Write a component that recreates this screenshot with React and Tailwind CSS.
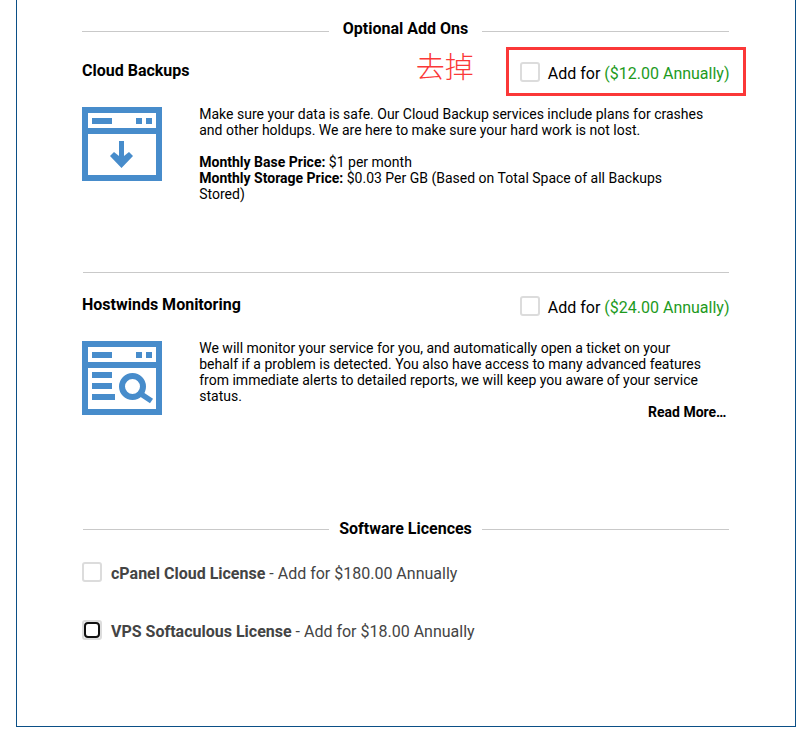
function SectionTitle({ children, leftRule, rightRule }) {
  return (
    <div className="flex h-5 w-[647px] items-start justify-between text-base font-bold leading-5 text-black">
      <span className={`h-px bg-[#c9c9c9] ${leftRule}`} />
      <h2 className="whitespace-nowrap">{children}</h2>
      <span className={`h-px w-[247px] bg-[#c9c9c9] ${rightRule}`} />
    </div>
  );
}

function Checkbox({ focused }) {
  return (
    <span className="flex size-5 shrink-0 items-center justify-center rounded-[3px] border-2 border-[#dcdcdc] bg-white">
      {focused && <span className="size-4 shrink-0 rounded-[4px] border-2 border-[#101010]" />}
    </span>
  );
}

function WindowIcon({ children }) {
  return (
    <svg className="block h-[74px] w-20 shrink-0" viewBox="0 0 80 74" fill="#478ccb">
      <path fillRule="evenodd" d="M0 0H80V74H0ZM6 6V21H74V6ZM6 27V68H74V27Z" />
      <path d="M10 11H30V17H10ZM54 11H60V17H54ZM64 11H70V17H64Z" />
      {children}
    </svg>
  );
}

function AddOn({ title, price, icon, note, highlight, children }) {
  return (
    <section className="text-black">
      <div className="-mr-[0.5px] flex h-[27px] items-start justify-between">
        <h3 className="pt-px text-base font-bold leading-5">{title}</h3>
        <div className="relative flex gap-2 pt-0.5">
          {note && (
            <span className="absolute -left-[104px] -top-[15px] whitespace-nowrap font-['Noto_Sans_CJK_SC',sans-serif] text-[29px] font-light leading-[40px] text-[#fb3838]">
              {note}
            </span>
          )}
          {highlight && (
            <span className="absolute -left-[14px] -top-[13px] h-[49px] w-60 border-[3px] border-[#fb3838]" />
          )}
          <Checkbox />
          <span className="whitespace-nowrap pt-0.5 text-base leading-5">
            Add for <span className="text-[#1d9a1d]">({price} Annually)</span>
          </span>
        </div>
      </div>
      <div className="mt-5 flex gap-[37px]">
        {icon}
        <div className="-mt-px w-[531px] pl-[0.25px] text-sm leading-4">{children}</div>
      </div>
    </section>
  );
}

function License({ name, price, focused }) {
  return (
    <div className="flex h-5 items-center gap-[9px] text-base leading-5 text-[#444]">
      <Checkbox focused={focused} />
      <span className="pt-[3px]">
        <b className="font-bold">{name}</b> - Add for {price} Annually
      </span>
    </div>
  );
}

export default function App() {
  return (
    <div className="h-[740px] w-[812px] overflow-hidden bg-white px-4 font-[Roboto,sans-serif]">
      <main className="h-[727px] w-[780px] border border-t-0 border-[#0b4f86] pl-[65px] pt-[19px]">
        <div className="w-[647px]">
          <SectionTitle leftRule="mt-3 w-[247px]" rightRule="mt-3">Optional Add Ons</SectionTitle>

          <div className="mt-[21px] h-[212px]">
            <AddOn
              title="Cloud Backups"
              price="$12.00"
              note="去掉"
              highlight
              icon={
                <WindowIcon>
                  <path d="M37 34H42V49L47 45L51 49L39.5 61L28 49L32 45L37 49Z" />
                </WindowIcon>
              }
            >
              <p>
                Make sure your data is safe. Our Cloud Backup services include plans for crashes
                <br />
                and other holdups. We are here to make sure your hard work is not lost.
              </p>
              <p className="mt-4">
                <b className="font-bold">Monthly Base Price:</b> $1 per month
                <br />
                <b className="font-bold">Monthly Storage Price:</b> $0.03 Per GB (Based on Total Space of all Backups
                <br />
                Stored)
              </p>
            </AddOn>
          </div>

          <hr className="ml-px border-t border-[#c9c9c9]" />

          <div className="mt-[21px] h-[225px]">
            <AddOn
              title="Hostwinds Monitoring"
              price="$24.00"
              icon={
                <WindowIcon>
                  <path d="M10 31H30V37H10ZM10 42H30V48H10ZM10 53H33V59H10Z" />
                  <circle cx="50.5" cy="45.5" r="10.5" fill="none" stroke="#478ccb" strokeWidth="6" />
                  <path d="M57.5 52L69.5 60" stroke="#478ccb" strokeWidth="5.5" />
                </WindowIcon>
              }
            >
              <p>
                We will monitor your service for you, and automatically open a ticket on your
                <br />
                behalf if a problem is detected. You also have access to many advanced features
                <br />
                from immediate alerts to detailed reports, we will keep you aware of your service
                <br />
                status.
              </p>
              <p className="pr-[2.5px] text-right font-bold">Read More…</p>
            </AddOn>
          </div>

          <SectionTitle leftRule="ml-px mt-2.5 w-[246px]" rightRule="mt-2.5">Software Licences</SectionTitle>

          <div className="mt-[23px] flex flex-col gap-[38px]">
            <License name="cPanel Cloud License" price="$180.00" />
            <License name="VPS Softaculous License" price="$18.00" focused />
          </div>
        </div>
      </main>
    </div>
  );
}
